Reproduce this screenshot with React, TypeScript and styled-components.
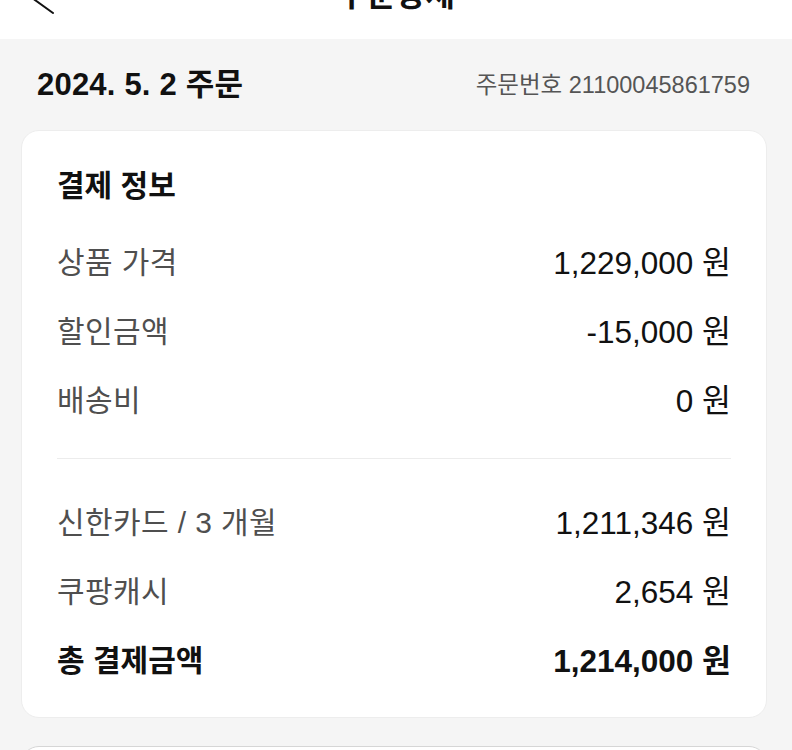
import React from "react";
import styled, { createGlobalStyle } from "styled-components";

const GlobalStyle = createGlobalStyle`
  html, body {
    margin: 0;
    padding: 0;
    background: #f5f5f5;
    overflow: hidden;
  }
  body {
    font-family: "Liberation Sans", "Noto Sans CJK KR", sans-serif;
    color: #111;
  }
`;

type PayRow = {
  label: string;
  amount: string;
  strong?: boolean;
};

const priceRows: PayRow[] = [
  { label: "상품 가격", amount: "1,229,000" },
  { label: "할인금액", amount: "-15,000" },
  { label: "배송비", amount: "0" },
];

const methodRows: PayRow[] = [
  { label: "신한카드 / 3 개월", amount: "1,211,346" },
  { label: "쿠팡캐시", amount: "2,654" },
  { label: "총 결제금액", amount: "1,214,000", strong: true },
];

const Page = styled.div`
  width: 792px;
  height: 750px;
  overflow: hidden;
`;

const Header = styled.header`
  display: grid;
  grid-template-columns: 1fr auto 1fr;
  align-items: center;
  height: 88px;
  margin-top: -49px;
  background: #fff;
`;

const BackButton = styled.button`
  justify-self: start;
  display: flex;
  align-items: center;
  margin: 0 0 0 24px;
  padding: 0;
  border: 0;
  background: none;
`;

const Title = styled.h1`
  margin: 0;
  font-size: 32px;
  font-weight: 700;
  line-height: 40px;
  color: #111;
`;

const Content = styled.main`
  display: flex;
  flex-direction: column;
  padding: 0 25px 0 21px;
`;

const OrderBar = styled.div`
  display: flex;
  align-items: center;
  justify-content: space-between;
  padding: 28px 17px 27px 16px;
  line-height: 36px;
`;

const OrderDate = styled.h2`
  margin: 0;
  font-size: 31px;
  font-weight: 700;
  letter-spacing: 0.2px;
  color: #111;
`;

const OrderNo = styled.span`
  font-size: 23.5px;
  color: #555;
`;

const Card = styled.section`
  display: flex;
  flex-direction: column;
  padding: 35px 35px 25px 35px;
  background: #fff;
  border: 1px solid #ededed;
  border-radius: 18px;
`;

const CardTitle = styled.h3`
  margin: 0 0 19px;
  font-size: 30px;
  font-weight: 700;
  line-height: 40px;
  color: #111;
`;

const Row = styled.div<{ $strong?: boolean }>`
  display: flex;
  align-items: center;
  justify-content: space-between;
  height: 69px;
  font-size: 30px;
  font-weight: ${(p) => (p.$strong ? 700 : 400)};
`;

const Label = styled.span<{ $strong?: boolean }>`
  color: ${(p) => (p.$strong ? "#111" : "#4f4f4f")};
  letter-spacing: ${(p) => (p.$strong ? "0" : "0.4px")};
`;

const Amount = styled.span`
  color: #111;
  font-size: 31.5px;
`;

const Divider = styled.hr`
  margin: 26px 0 26px;
  border: 0;
  border-top: 1.5px solid #ececec;
`;

const NextCard = styled.section`
  margin-top: 28px;
  height: 120px;
  background: #fff;
  border: 1.5px solid #d6d6d6;
  border-radius: 18px;
`;

const BackIcon = () => (
  <svg width="32" height="38" viewBox="0 0 32 38" fill="none">
    <polyline
      points="29,1 4,19 29,37"
      stroke="#111"
      strokeWidth="2"
      strokeLinecap="round"
      strokeLinejoin="round"
    />
  </svg>
);

const PaymentRow: React.FC<PayRow> = ({ label, amount, strong }) => (
  <Row $strong={strong}>
    <Label $strong={strong}>{label}</Label>
    <Amount>{amount} 원</Amount>
  </Row>
);

const App = () => {
  return (
    <>
      <GlobalStyle />
      <Page>
        <Header>
          <BackButton aria-label="뒤로">
            <BackIcon />
          </BackButton>
          <Title>주문상세</Title>
          <div />
        </Header>
        <Content>
          <OrderBar>
            <OrderDate>2024. 5. 2 주문</OrderDate>
            <OrderNo>주문번호 21100045861759</OrderNo>
          </OrderBar>
          <Card>
            <CardTitle>결제 정보</CardTitle>
            {priceRows.map((row) => (
              <PaymentRow key={row.label} {...row} />
            ))}
            <Divider />
            {methodRows.map((row) => (
              <PaymentRow key={row.label} {...row} />
            ))}
          </Card>
          <NextCard />
        </Content>
      </Page>
    </>
  );
};

export default App;
